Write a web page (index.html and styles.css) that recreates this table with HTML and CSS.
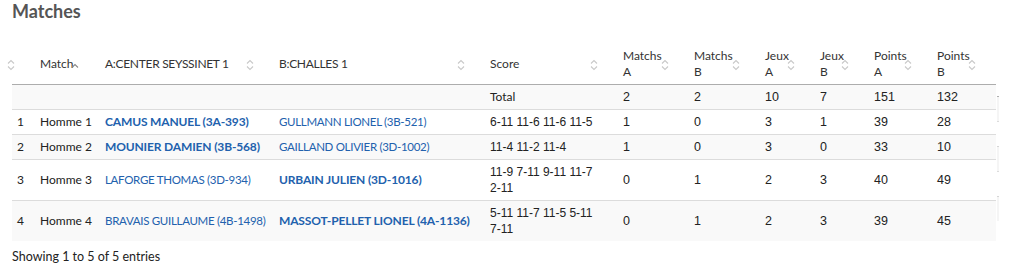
FILE: index.html
```html
<!DOCTYPE html>
<html lang="fr">
<head>
<meta charset="utf-8">
<title>Matches</title>
<link rel="stylesheet" href="styles.css">
</head>
<body>
<div class="page">
  <h2 class="title">Matches</h2>
  <div class="wrap">
    <table class="matches">
      <colgroup>
        <col class="c0"><col class="c1"><col class="c2"><col class="c3"><col class="c4">
        <col class="c5"><col class="c6"><col class="c7"><col class="c8"><col class="c9"><col class="c10">
      </colgroup>
      <thead>
        <tr>
          <th><span class="sort"><svg viewBox="0 0 8 12" width="8" height="12"><polyline points="1,4.5 4,1.5 7,4.5"/><polyline points="1,7.5 4,10.5 7,7.5"/></svg></span></th>
          <th>Match<span class="sort asc"><svg viewBox="0 0 8 12" width="8" height="12"><polyline points="1,8.5 4,5.5 7,8.5"/></svg></span></th>
          <th class="caps">A:CENTER SEYSSINET 1<span class="sort"><svg viewBox="0 0 8 12" width="8" height="12"><polyline points="1,4.5 4,1.5 7,4.5"/><polyline points="1,7.5 4,10.5 7,7.5"/></svg></span></th>
          <th class="caps">B:CHALLES 1<span class="sort"><svg viewBox="0 0 8 12" width="8" height="12"><polyline points="1,4.5 4,1.5 7,4.5"/><polyline points="1,7.5 4,10.5 7,7.5"/></svg></span></th>
          <th>Score<span class="sort"><svg viewBox="0 0 8 12" width="8" height="12"><polyline points="1,4.5 4,1.5 7,4.5"/><polyline points="1,7.5 4,10.5 7,7.5"/></svg></span></th>
          <th>Matchs<br>A<span class="sort"><svg viewBox="0 0 8 12" width="8" height="12"><polyline points="1,4.5 4,1.5 7,4.5"/><polyline points="1,7.5 4,10.5 7,7.5"/></svg></span></th>
          <th>Matchs<br>B<span class="sort"><svg viewBox="0 0 8 12" width="8" height="12"><polyline points="1,4.5 4,1.5 7,4.5"/><polyline points="1,7.5 4,10.5 7,7.5"/></svg></span></th>
          <th>Jeux<br>A<span class="sort"><svg viewBox="0 0 8 12" width="8" height="12"><polyline points="1,4.5 4,1.5 7,4.5"/><polyline points="1,7.5 4,10.5 7,7.5"/></svg></span></th>
          <th>Jeux<br>B<span class="sort"><svg viewBox="0 0 8 12" width="8" height="12"><polyline points="1,4.5 4,1.5 7,4.5"/><polyline points="1,7.5 4,10.5 7,7.5"/></svg></span></th>
          <th>Points<br>A<span class="sort"><svg viewBox="0 0 8 12" width="8" height="12"><polyline points="1,4.5 4,1.5 7,4.5"/><polyline points="1,7.5 4,10.5 7,7.5"/></svg></span></th>
          <th>Points<br>B<span class="sort"><svg viewBox="0 0 8 12" width="8" height="12"><polyline points="1,4.5 4,1.5 7,4.5"/><polyline points="1,7.5 4,10.5 7,7.5"/></svg></span></th>
        </tr>
      </thead>
      <tbody>
        <tr class="odd">
          <td></td><td></td><td></td><td></td><td>Total</td>
          <td class="num">2</td><td class="num">2</td><td class="num">10</td><td class="num">7</td><td class="num">151</td><td class="num">132</td>
        </tr>
        <tr class="even">
          <td>1</td><td>Homme 1</td>
          <td><a class="player win" href="#">CAMUS MANUEL (3A-393)</a></td>
          <td><a class="player" href="#">GULLMANN LIONEL (3B-521)</a></td>
          <td class="score">6-11 11-6 11-6 11-5</td>
          <td class="num">1</td><td class="num">0</td><td class="num">3</td><td class="num">1</td><td class="num">39</td><td class="num">28</td>
        </tr>
        <tr class="odd">
          <td>2</td><td>Homme 2</td>
          <td><a class="player win" href="#">MOUNIER DAMIEN (3B-568)</a></td>
          <td><a class="player" href="#">GAILLAND OLIVIER (3D-1002)</a></td>
          <td class="score">11-4 11-2 11-4</td>
          <td class="num">1</td><td class="num">0</td><td class="num">3</td><td class="num">0</td><td class="num">33</td><td class="num">10</td>
        </tr>
        <tr class="even">
          <td>3</td><td>Homme 3</td>
          <td><a class="player" href="#">LAFORGE THOMAS (3D-934)</a></td>
          <td><a class="player win" href="#">URBAIN JULIEN (3D-1016)</a></td>
          <td class="score">11-9 7-11 9-11 11-7 2-11</td>
          <td class="num">0</td><td class="num">1</td><td class="num">2</td><td class="num">3</td><td class="num">40</td><td class="num">49</td>
        </tr>
        <tr class="odd">
          <td>4</td><td>Homme 4</td>
          <td><a class="player" href="#">BRAVAIS GUILLAUME (4B-1498)</a></td>
          <td><a class="player win" href="#">MASSOT-PELLET LIONEL (4A-1136)</a></td>
          <td class="score">5-11 11-7 11-5 5-11 7-11</td>
          <td class="num">0</td><td class="num">1</td><td class="num">2</td><td class="num">3</td><td class="num">39</td><td class="num">45</td>
        </tr>
      </tbody>
    </table>
    <div class="edge">
      <div class="frag first"></div>
      <div class="frag"></div>
      <div class="frag last"></div>
    </div>
  </div>
  <div class="info">Showing 1 to 5 of 5 entries</div>
</div>
</body>
</html>
```
FILE: styles.css
```css
html, body {
  margin: 0;
  padding: 0;
  background: #fff;
}
.page {
  padding: 0 12px;
  font-family: "Lato", "Liberation Sans", sans-serif;
  font-size: 12.5px;
  color: #222;
}
.title {
  margin: 0 0 22px 0;
  font-size: 18px;
  line-height: 22px;
  font-weight: bold;
  color: #555;
}
.wrap {
  display: flex;
  align-items: flex-start;
}
.matches {
  width: 984px;
  table-layout: fixed;
  border-collapse: collapse;
  border-spacing: 0;
}
.c0 { width: 23px; }
.c1 { width: 65px; }
.c2 { width: 174px; }
.c3 { width: 211px; }
.c4 { width: 133px; }
.c5 { width: 71px; }
.c6 { width: 71px; }
.c7 { width: 55px; }
.c8 { width: 54px; }
.c9 { width: 63px; }
.c10 { width: 64px; }
.matches th {
  position: relative;
  text-align: left;
  font-weight: normal;
  font-size: 12px;
  color: #333;
  line-height: 16px;
  padding: 4px 5px;
  height: 32px;
  vertical-align: middle;
  white-space: nowrap;
  border-bottom: 1px solid #adadad;
}
.matches th.caps {
  letter-spacing: -0.3px;
}
.sort {
  position: absolute;
  right: 20px;
  top: 15px;
  width: 8px;
  height: 12px;
  display: block;
}
.sort svg {
  display: block;
  fill: none;
  stroke: #c9c9c9;
  stroke-width: 1.1;
}
.sort.asc svg {
  stroke: #8a8a8a;
}
.matches th:nth-child(2) .sort {
  right: 21px;
}
.matches td {
  padding: 4px 4px 4px 5px;
  font-size: 12px;
  line-height: 16px;
  vertical-align: middle;
  border-top: 1px solid #dcdcdc;
  white-space: nowrap;
}
.matches tbody tr:first-child td {
  border-top: none;
}
.matches tr.odd td {
  background: #f9f9f9;
}
.matches td.score {
  white-space: normal;
  padding-right: 14px;
  font-family: "Liberation Sans Narrow", "Liberation Sans", sans-serif;
  font-size: 12px;
}
.matches td.num {
  font-family: "Liberation Sans Narrow", "Liberation Sans", sans-serif;
  font-size: 12.5px;
}
.player {
  color: #2261ad;
  text-decoration: none;
  font-size: 11.5px;
  letter-spacing: -0.3px;
}
.player.win {
  font-size: 12px;
  font-weight: bold;
  letter-spacing: -0.15px;
}
.edge {
  width: 4px;
  margin-left: 1px;
  padding-top: 52px;
  display: flex;
  flex-direction: column;
  gap: 24px;
}
.frag {
  height: 24px;
  background: #f5f5f5;
  border-top: 1px solid #d6d6d6;
  border-bottom: 1px solid #dcdcdc;
}
.frag.first {
  border-top-color: #b0b0b0;
}
.frag.last {
  border-bottom: none;
}
.info {
  margin-top: 8px;
  line-height: 16px;
  color: #222;
}
```
